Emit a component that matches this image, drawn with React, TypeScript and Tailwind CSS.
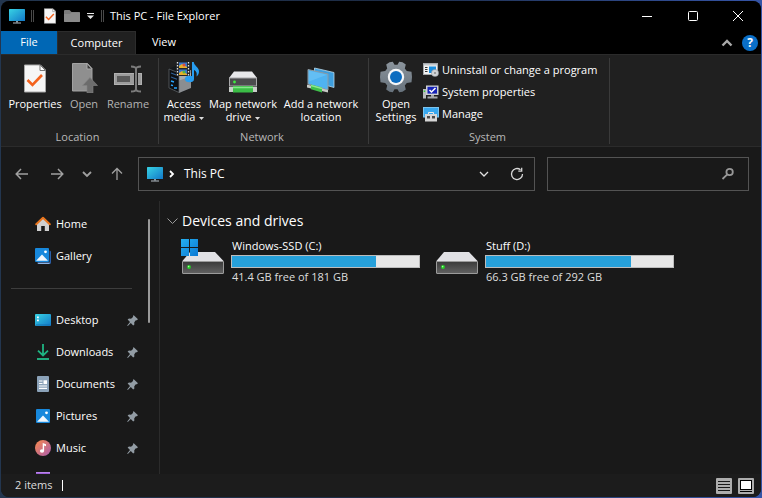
import type { ReactNode } from "react";

/* ---------- icons ---------- */

function PcIcon({ className = "" }: { className?: string }) {
  return (
    <svg viewBox="0 0 16 16" width="16" height="16" className={className} aria-hidden="true">
      <defs>
        <linearGradient id="pc" x1="0" y1="0" x2="1" y2="1">
          <stop offset="0" stopColor="#38d3e4" />
          <stop offset="1" stopColor="#1278c8" />
        </linearGradient>
      </defs>
      <rect x="0" y="1" width="16" height="12" rx="0.6" fill="url(#pc)" />
      <path d="M7 13h2v1.5H7z" fill="#8a98a4" />
      <path d="M4 14.4h8v1H4z" fill="#b4bec6" />
    </svg>
  );
}

function CheckedPage({ w, h }: { w: number; h: number }) {
  return (
    <svg viewBox="0 0 22 28" width={w} height={h} aria-hidden="true">
      <path d="M.5.5h16l5 5v22H.5z" fill="#f6f6f6" stroke="#a8a8a8" />
      <path d="M16 .5v5.5h5.5z" fill="#fff" stroke="#777" />
      <path d="M3.500 15.500l5 5L18 10.500" fill="none" stroke="#f4631e" strokeWidth="2.6" />
    </svg>
  );
}

function OpenPage() {
  return (
    <svg viewBox="0 0 28 31" width="28" height="31" aria-hidden="true">
      <path d="M2.500 1.500h15l4.500 5v22.500H2.500z" fill="#8f8f8f" stroke="#a2a2a2" />
      <path d="M17 1.500v5.500h5z" fill="#3a3a3a" stroke="#aaa" />
      <path d="M20 15.500l7.500 8H23V31h-6v-7.500h-4.500z" fill="#6c6c6c" stroke="#858585" strokeWidth=".6" />
    </svg>
  );
}

function RenameIcon() {
  return (
    <svg viewBox="0 0 28 28" width="28" height="28" aria-hidden="true">
      <rect x=".5" y="8.500" width="27" height="11" fill="#9c9c9c" stroke="#b0b0b0" />
      <rect x="3" y="11" width="13" height="6" fill="#5a5a5a" />
      <path d="M17 1.500c3 0 5 .5 5 2.500 0-2 2-2.500 5-2.500M22 4v20M17 26.500c3 0 5-.5 5-2.500 0 2 2 2.500 5 2.500" fill="none" stroke="#202020" strokeWidth="4" />
      <path d="M17 1.500c3 0 5 .5 5 2.500 0-2 2-2.500 5-2.500M22 4v20M17 26.500c3 0 5-.5 5-2.500 0 2 2 2.500 5 2.500" fill="none" stroke="#7b7b7b" strokeWidth="2" />
    </svg>
  );
}

function MediaIcon() {
  return (
    <svg viewBox="0 0 32 32" width="32" height="32" aria-hidden="true">
      <path d="M1 8l8-4 14 3v20l-9 4.500-13-4z" fill="#15191d" />
      <path d="M11 12l12-3v18l-12 5z" fill="#8b8e91" />
      <path d="M11 15l12-3v3.500l-12 4z" fill="#a9acae" />
      <path d="M1 8l10 4v19.500L1 27z" fill="#0d0f12" stroke="#666b70" strokeWidth=".7" />
      <path d="M3 12l6 2.300M3 16l6 2.300" stroke="#2f5f94" strokeWidth="1.200" />
      <path d="M3 20l3 1M6 27h3M3 24l2 .6" stroke="#29a5ff" strokeWidth="1.500" />
      <rect x="8" y="1" width="14" height="14" fill="#23262b" />
      <path d="M9.500 1v14M20.500 1v14" stroke="#e2e2e2" strokeWidth="1.300" strokeDasharray="1.500 1.500" />
      <rect x="11" y="1.500" width="8" height="5.500" fill="#3975cc" />
      <rect x="11" y="8.500" width="8" height="5.500" fill="#3975cc" />
      <path d="M11 5l3-2 5 3v1h-8zM11 12l3-2 5 3v1h-8z" fill="#e8b02b" />
      <circle cx="16" cy="4" r="1.500" fill="#e04c3c" />
      <circle cx="16" cy="11" r="1.500" fill="#54b843" />
      <ellipse cx="21.500" cy="18" rx="4.500" ry="3.200" fill="#279df0" />
      <path d="M24 18V1h1.800c0 4 5.700 5 5.200 10-.3 2-1.200 3.500-2.500 4.500 1-4-1-6-2.500-6.500v9z" fill="#279df0" />
    </svg>
  );
}

function NetDriveIcon() {
  return (
    <svg viewBox="0 0 28 22" width="28" height="22" aria-hidden="true">
      <path d="M5 .5h18l5 6.500H0z" fill="#e8e8ea" />
      <rect x=".5" y="7" width="27" height="8" fill="#4b4b4d" stroke="#a9a9ab" />
      <circle cx="5.500" cy="11" r="1.400" fill="#3fea3f" />
      <rect x="0" y="16" width="28" height="5" fill="#c9cdc9" />
      <rect x="4" y="15" width="20" height="6.500" fill="#3bbd46" />
      <path d="M4 16.500h20" stroke="#86e68b" strokeWidth="1.500" />
    </svg>
  );
}

function NetPlaceIcon() {
  return (
    <svg viewBox="0 0 28 26" width="28" height="26" aria-hidden="true">
      <path d="M7.500 1l19.500 4.500v15L7.500 15z" fill="#3f9fde" stroke="#b9d8ea" strokeWidth=".8" />
      <path d="M1 2.500l20 4.500v16L1 17z" fill="#4fb3f1" stroke="#8e9aa2" />
      <path d="M2 3.700l18 4.100L2 14.500z" fill="#83cff9" opacity=".4" />
      <path d="M0 17.500l21 5.500v2.500L0 20.500z" fill="#c6cac6" />
      <path d="M4 17.500l11 3v5L4 22.300z" fill="#3fbf4b" />
      <path d="M4 18.500l11 3" stroke="#8be891" strokeWidth="1.300" />
    </svg>
  );
}

function GearIcon() {
  return (
    <svg viewBox="0 0 32 32" width="32" height="32" aria-hidden="true">
      <defs>
        <linearGradient id="gear" x1="0" y1="0" x2="0" y2="1">
          <stop offset="0" stopColor="#8b949c" />
          <stop offset="1" stopColor="#67727c" />
        </linearGradient>
      </defs>
      <path
        d="M9.500 1.200l3.300-.4 1.700 2.900h3l1.700-2.900 3.300.4 3.300 2.300-1 4 2 2.500 4.700.8.500 5.200-.5 5.200-4.700.8-2 2.500 1 4-3.300 2.300-3.300.4-1.700-2.900h-3l-1.700 2.900-3.300-.4-3.300-2.300 1-4-2-2.500-4.700-.8L0 16l.5-5.200 4.700-.8 2-2.500-1-4z"
        fill="url(#gear)"
      />
      <circle cx="16" cy="16" r="8.200" fill="#f4f6f8" />
      <circle cx="16" cy="16" r="6" fill="#0b6cc0" />
    </svg>
  );
}

function UninstallIcon() {
  return (
    <svg viewBox="0 0 16 14" width="16" height="14" aria-hidden="true">
      <rect x=".5" y=".5" width="14" height="11" fill="#f2f2f2" stroke="#a5a9ad" />
      <rect x="1" y="1" width="13" height="1.500" fill="#c3c8cc" />
      <path d="M2 4.500h2.500M2 6.500h2.500M2 8.500h2.500" stroke="#333" />
      <rect x="6" y="3.500" width="7" height="6.500" fill="#1b8fe0" />
      <circle cx="12" cy="10" r="3.600" fill="#cfd3d6" stroke="#8b8f92" strokeWidth=".5" />
      <circle cx="12" cy="10" r="1" fill="#888" />
    </svg>
  );
}

function SysPropsIcon() {
  return (
    <svg viewBox="0 0 16 14" width="16" height="14" aria-hidden="true">
      <rect x="0" y="4" width="3" height="9.500" fill="#b9bcbe" />
      <rect x=".7" y="5.500" width="1.500" height="1.500" fill="#3cd03c" />
      <rect x="3" y=".5" width="12.500" height="9.500" fill="#cfd1d3" />
      <rect x="4.500" y="1.800" width="9.500" height="6.800" fill="#1723b8" />
      <path d="M6.500 5l2 2L12.500 3" fill="none" stroke="#fff" strokeWidth="1.500" />
      <path d="M8 10h3v1.500h3.500v2h-10v-2H8z" fill="#a6a9ac" />
    </svg>
  );
}

function ManageIcon() {
  return (
    <svg viewBox="0 0 16 15" width="16" height="15" aria-hidden="true">
      <rect x=".5" y=".5" width="15" height="9.500" fill="#38a8ef" stroke="#7cc4ee" />
      <path d="M5.500 7V5.500h5V7" fill="none" stroke="#e8e8e8" />
      <rect x="2" y="7" width="12" height="7.500" fill="#d6d6d6" />
      <rect x="4" y="9" width="3" height="2.500" fill="#4a4a4a" />
      <rect x="9" y="9" width="3" height="2.500" fill="#4a4a4a" />
    </svg>
  );
}

function HomeIcon() {
  return (
    <svg viewBox="0 0 16 16" width="16" height="16" aria-hidden="true">
      <path d="M2 7.500L8 2l6 5.500V15H2z" fill="#d0d0d0" />
      <path d="M6.200 10h3.600v5.500H6.200z" fill="#191919" />
      <path d="M1.200 8.200L8 1.800l6.800 6.400" fill="none" stroke="#e8741c" strokeWidth="2" strokeLinejoin="round" strokeLinecap="round" />
    </svg>
  );
}

function PictureIcon({ stacked = false }: { stacked?: boolean }) {
  return (
    <svg viewBox="0 0 16 16" width="16" height="16" aria-hidden="true">
      {stacked && <path d="M14.500 2.500a1.500 1.500 0 011.500 1.500v10.500a1.500 1.500 0 01-1.500 1.500H4a1.500 1.500 0 01-1.500-1.500h12z" fill="#2a5fa8" />}
      {stacked && <path d="M2.500 14.700h12.300c0 .8-.6 1.300-1.300 1.300H4a1.500 1.500 0 01-1.500-1.300z" fill="#8fb4e6" />}
      <g transform={stacked ? undefined : "translate(1 1)"}>
        <rect width="14" height="14" rx="1" fill="#1788dc" />
        <path d="M1 12.800L7 6.500l6 6.300z" fill="#f0f7fd" />
        <circle cx="10.500" cy="3.800" r="1.400" fill="#fff" />
      </g>
    </svg>
  );
}

function DesktopIcon() {
  return (
    <svg viewBox="0 0 16 16" width="16" height="16" aria-hidden="true">
      <rect y="2" width="16" height="12" rx="1" fill="url(#pc)" />
      <path d="M2 4.500h1.800v1.800H2zM2 7.500h1.800v1.800H2z" fill="#fff" />
      <path d="M1 13h14" stroke="#126fb0" />
    </svg>
  );
}

function DownloadIcon() {
  return (
    <svg viewBox="0 0 16 16" width="16" height="16" aria-hidden="true">
      <path d="M8 0v11M3 6.700l5 4.800 5-4.800" fill="none" stroke="#1fb583" strokeWidth="1.800" />
      <path d="M2 15h12" stroke="#23bd8a" strokeWidth="1.800" />
    </svg>
  );
}

function DocumentIcon() {
  return (
    <svg viewBox="0 0 16 16" width="16" height="16" aria-hidden="true">
      <rect x="2" width="12" height="16" rx="1" fill="#8ba2b8" />
      <path d="M4 5h3.500M4 7.500h3.500M4 10h8M4 12.300h8" stroke="#fff" strokeWidth="1.200" />
      <rect x="8.500" y="4.300" width="3.500" height="3.800" fill="#fff" />
    </svg>
  );
}

function MusicIcon() {
  return (
    <svg viewBox="0 0 16 16" width="16" height="16" aria-hidden="true">
      <defs>
        <linearGradient id="mus" x1="0" y1="0" x2="1" y2="1">
          <stop offset="0" stopColor="#f98a4c" />
          <stop offset="1" stopColor="#a95cae" />
        </linearGradient>
      </defs>
      <circle cx="8" cy="8" r="8" fill="url(#mus)" />
      <ellipse cx="7" cy="11" rx="2.100" ry="1.800" fill="#fff" />
      <path d="M7.700 11V3l3.300 1.200v2L9.100 5.600V11z" fill="#fff" />
    </svg>
  );
}

function VideoIcon() {
  return (
    <svg viewBox="0 0 16 16" width="16" height="16" aria-hidden="true">
      <rect x="1" y="0" width="14" height="15" rx="1" fill="#9d5fd6" />
      <path d="M1 .5h14" stroke="#b884ea" />
    </svg>
  );
}

function PinIcon() {
  return (
    <svg viewBox="0 0 11 11" width="11" height="11" aria-hidden="true">
      <path d="M6.500 0L11 4.300l-1.300.9-1.200.3-1.300 2 .2 2L6.200 10.500 3.800 8 .8 11l-.6-.6L3 7 .6 4.600 2 3.600l2 .2 1.800-1.500z" fill="#929ca4" />
    </svg>
  );
}

function DriveIcon({ system = false }: { system?: boolean }) {
  return (
    <svg viewBox="0 0 43 36" width="43" height="36" aria-hidden="true">
      <defs>
        <linearGradient id="drv" x1="0" y1="0" x2="0" y2="1">
          <stop offset="0" stopColor="#3a3a3a" />
          <stop offset="1" stopColor="#626262" />
        </linearGradient>
        <linearGradient id="win" x1="0" y1="0" x2="1" y2="1">
          <stop offset="0" stopColor="#25b0f0" />
          <stop offset="1" stopColor="#0a78d4" />
        </linearGradient>
      </defs>
      <path d="M9 13h25l9 9.500H1z" fill="#e1e1e5" />
      <rect x="1.500" y="22.500" width="41" height="12" rx=".5" fill="url(#drv)" stroke="#9b9b9b" />
      <circle cx="8" cy="28" r="1.900" fill="#22d322" />
      <circle cx="7.600" cy="27.600" r=".8" fill="#a2ffa2" />
      {system && <path d="M0 0h8v8H0zM9 0h8v8H9zM0 9h8v8H0zM9 9h8v8H9z" fill="url(#win)" />}
    </svg>
  );
}

function Stroke({ d, size = 14, color = "#d0d0d0", width = 1 }: { d: string; size?: number; color?: string; width?: number }) {
  return (
    <svg viewBox="0 0 14 14" width={size} height={size} fill="none" stroke={color} strokeWidth={width} aria-hidden="true">
      <path d={d} />
    </svg>
  );
}

function Caret() {
  return (
    <svg viewBox="0 0 5 3" width="5" height="3" className="ml-1 inline-block align-middle" aria-hidden="true">
      <path d="M0 0h5L2.500 3z" fill="#ddd" />
    </svg>
  );
}

/* ---------- ribbon ---------- */

function RibbonGroup({ label, width, children }: { label: string; width: string; children: ReactNode }) {
  return (
    <section aria-label={label} className={`flex flex-col border-r border-[#3a3a3a] ${width}`}>
      <div className="flex flex-1 items-start">{children}</div>
      <div className="pr-1 text-center leading-[14px] text-[#b8b8b8]">{label}</div>
    </section>
  );
}

function BigButton({ icon, width, disabled, children }: { icon: ReactNode; width: string; disabled?: boolean; children: ReactNode }) {
  return (
    <button type="button" disabled={disabled} className={`flex flex-col items-center whitespace-nowrap leading-[13px] disabled:text-[#b4b4b4] ${width}`}>
      <span className="mb-[3px] flex h-9 items-end justify-center pb-px">{icon}</span>
      <span>{children}</span>
    </button>
  );
}

function SmallButton({ icon, children }: { icon: ReactNode; children: ReactNode }) {
  return (
    <button type="button" className="flex h-[22px] items-center gap-[3px] whitespace-nowrap">
      {icon}
      {children}
    </button>
  );
}

/* ---------- panes ---------- */

const pinned = [
  { name: "Desktop", icon: <DesktopIcon /> },
  { name: "Downloads", icon: <DownloadIcon /> },
  { name: "Documents", icon: <DocumentIcon /> },
  { name: "Pictures", icon: <PictureIcon /> },
  { name: "Music", icon: <MusicIcon /> },
  { name: "Videos", icon: <VideoIcon /> },
];

function NavItem({ icon, name, pin }: { icon: ReactNode; name: string; pin?: boolean }) {
  return (
    <li>
      <a href="#" className="flex h-8 items-center pr-[21px] pl-[34px]">
        {icon}
        <span className="ml-[5px] flex-1">{name}</span>
        {pin && <PinIcon />}
      </a>
    </li>
  );
}

const drives = [
  { name: "Windows-SSD (C:)", free: 41.4, total: 181, system: true },
  { name: "Stuff (D:)", free: 66.3, total: 292, system: false },
];

function Drive({ name, free, total, system }: (typeof drives)[number]) {
  const used = ((total - free) / total) * 100;
  return (
    <li className="flex w-[254px]">
      <DriveIcon system={system} />
      <div className="ml-[7px] w-[189px] leading-[14px]">
        <div className="ml-px pb-[2px]">{name}</div>
        <div role="meter" aria-label={`${name} used space`} aria-valuenow={Math.round(used)} aria-valuemin={0} aria-valuemax={100} className="h-[13px] border border-[#bcbcbc] bg-[#e6e6e6]">
          <div className="h-full bg-[#26a0da]" style={{ width: `${used}%` }} />
        </div>
        <div className="ml-px pt-[2px] text-[#dedede]">
          {free} GB free of {total} GB
        </div>
      </div>
    </li>
  );
}

export default function App() {
  return (
    <div className="h-screen bg-gradient-to-r from-[#23364f] via-[#1d2c46] to-[#3554a6] p-px font-['Open_Sans','Noto_Sans',sans-serif] text-[11px] text-white">
      <div className="flex h-full flex-col overflow-hidden rounded-lg bg-[#191919]">
        <header className="flex h-[30px] shrink-0 items-center bg-black pl-2">
          <PcIcon />
          <span className="ml-[6px] h-3 w-[3px] border-x border-[#4a4a4a]" />
          <button type="button" aria-label="Properties" className="ml-[10px]">
            <CheckedPage w={12} h={16} />
          </button>
          <button type="button" aria-label="New folder" className="ml-2">
            <svg viewBox="0 0 16 14" width="16" height="14" aria-hidden="true">
              <path d="M0 2a1 1 0 011-1h4.500L7.500 3H15a1 1 0 011 1v8a1 1 0 01-1 1H1a1 1 0 01-1-1z" fill="#7b7b7b" />
              <path d="M0 5h6l1.500-1.500H16V12a1 1 0 01-1 1H1a1 1 0 01-1-1z" fill="#8a8a8a" />
            </svg>
          </button>
          <button type="button" aria-label="Customize toolbar" className="ml-[7px]">
            <svg viewBox="0 0 7 6" width="7" height="6" aria-hidden="true">
              <path d="M0 0h7v1H0zM0 2.500h7L3.500 6z" fill="#e8e8e8" />
            </svg>
          </button>
          <span className="ml-[7px] h-3 w-[3px] border-x border-[#4a4a4a]" />
          <h1 className="ml-[6px] flex-1">This PC - File Explorer</h1>
          <button type="button" aria-label="Minimize" className="flex h-full w-[46px] items-center justify-center">
            <Stroke d="M2 7.500h10" color="#fff" />
          </button>
          <button type="button" aria-label="Maximize" className="flex h-full w-[45px] items-center justify-center">
            <Stroke d="M3.500 2.500h7a1 1 0 011 1v7a1 1 0 01-1 1h-7a1 1 0 01-1-1v-7a1 1 0 011-1z" color="#fff" />
          </button>
          <button type="button" aria-label="Close" className="flex h-full w-[46px] items-center justify-center">
            <Stroke d="M2 2l10 10M12 2L2 12" color="#fff" />
          </button>
        </header>

        <div role="tablist" className="flex h-[23px] shrink-0 items-stretch bg-black">
          <button type="button" role="tab" aria-selected="false" className="w-14 bg-[#0067b5]">File</button>
          <button type="button" role="tab" aria-selected="true" className="w-[79px] border border-b-0 border-[#2c2c2c] bg-[#202020]">Computer</button>
          <button type="button" role="tab" aria-selected="false" className="w-14">View</button>
          <div className="flex flex-1 items-center justify-end gap-2 pr-[3px]">
            <button type="button" aria-label="Collapse the ribbon">
              <Stroke d="M2.500 9.500L7 5l4.500 4.500" color="#a9a9a9" width={2.4} />
            </button>
            <button type="button" aria-label="Help" className="size-4 rounded-full bg-[#0a6fc8] text-center text-[12px] font-bold leading-4">?</button>
          </div>
        </div>

        <div className="flex h-[93px] shrink-0 border-y border-[#2b2b2b] bg-[#202020] pt-[3px] pb-[2px]">
          <RibbonGroup label="Location" width="w-[158px]">
            <BigButton width="ml-[7px] w-[54px]" icon={<CheckedPage w={22} h={29} />}>Properties</BigButton>
            <BigButton width="w-11" disabled icon={<OpenPage />}>Open</BigButton>
            <BigButton width="w-11" disabled icon={<RenameIcon />}>Rename</BigButton>
          </RibbonGroup>
          <RibbonGroup label="Network" width="w-[210px] pl-px">
            <BigButton width="w-12" icon={<MediaIcon />}>Access<br />media<Caret /></BigButton>
            <BigButton width="w-[70px]" icon={<NetDriveIcon />}>Map network<br />drive<Caret /></BigButton>
            <BigButton width="w-[86px]" icon={<NetPlaceIcon />}>Add a network<br />location</BigButton>
          </RibbonGroup>
          <RibbonGroup label="System" width="w-[241px] pl-px">
            <BigButton width="w-[52px]" icon={<GearIcon />}>Open<br />Settings</BigButton>
            <div className="flex flex-col pt-px pl-px">
              <SmallButton icon={<UninstallIcon />}>Uninstall or change a program</SmallButton>
              <SmallButton icon={<SysPropsIcon />}>System properties</SmallButton>
              <SmallButton icon={<ManageIcon />}>Manage</SmallButton>
            </div>
          </RibbonGroup>
        </div>

        <div className="flex h-[54px] shrink-0 items-center pr-3 pl-[14px]">
          <div className="flex w-[123px] items-center">
            <button type="button" aria-label="Back"><Stroke d="M13 7H1.500M6 2L1.200 7 6 12" color="#a0a0a0" width={1.5} /></button>
            <button type="button" aria-label="Forward" className="ml-[21px]"><Stroke d="M1 7h11.500M8 2l4.800 5L8 12" color="#a0a0a0" width={1.5} /></button>
            <button type="button" aria-label="Recent locations" className="ml-4"><Stroke d="M3 5l4 4 4-4" color="#a0a0a0" width={1.8} /></button>
            <button type="button" aria-label="Up" className="ml-4"><Stroke d="M7 13V1.500M2 6.500l5-5 5 5" color="#a0a0a0" width={1.3} /></button>
          </div>
          <nav aria-label="Address" className="flex h-[34px] flex-1 items-center border border-[#535353] pr-[10px] pl-2">
            <PcIcon />
            <span className="ml-[2px]"><Stroke d="M5 4l3 3-3 3" color="#fff" width={1.8} /></span>
            <a href="#" className="ml-[5px] flex-1 text-[12px]">This PC</a>
            <button type="button" aria-label="Previous locations"><Stroke d="M3 5l4 4 4-4" color="#e0e0e0" width={1.3} /></button>
            <button type="button" aria-label="Refresh" className="ml-[19px]"><Stroke d="M12.500 7A5.500 5.500 0 1 1 10.500 2.800M11.700 .8v3.400H8.300" color="#d8d8d8" width={1.3} /></button>
          </nav>
          <label className="ml-3 flex h-[34px] w-[202px] items-center border border-[#535353] pr-[13px]">
            <input type="search" aria-label="Search This PC" className="min-w-0 flex-1 bg-transparent px-2 outline-none" />
            <Stroke d="M11.800 5a3.200 3.200 0 1 1-6.400 0a3.200 3.200 0 0 1 6.400 0zM6.300 7.300L1.500 12" color="#979797" width={1.8} />
          </label>
        </div>

        <main className="flex min-h-0 flex-1">
          <aside className="flex w-[159px] shrink-0 border-r border-[#2b2b2b]">
            <div className="flex-1 overflow-y-auto pt-[7px] [scrollbar-width:none]">
              <ul>
                <NavItem icon={<HomeIcon />} name="Home" />
                <NavItem icon={<PictureIcon stacked />} name="Gallery" />
              </ul>
              <hr className="mt-4 mr-[27px] mb-[15px] ml-[10px] border-[#3d3d3d]" />
              <ul>
                {pinned.map((p) => (
                  <NavItem key={p.name} icon={p.icon} name={p.name} pin />
                ))}
              </ul>
            </div>
            <div className="-ml-[11px] mt-[18px] mr-[9px] h-[104px] w-[2px] rounded-full bg-[#9a9a9a]" />
          </aside>
          <section className="min-w-0 flex-1 pt-[9px] pl-[6px]">
            <h2 className="flex items-center text-[14px] leading-[22px]">
              <Stroke d="M1.500 4.500l5 5 5-5" color="#9a9a9a" />
              <span className="ml-[2px]">Devices and drives</span>
            </h2>
            <ul className="mt-[7px] flex flex-wrap pl-[15px]">
              {drives.map((d) => (
                <Drive key={d.name} {...d} />
              ))}
            </ul>
          </section>
        </main>

        <footer className="flex h-[23px] shrink-0 items-center bg-[#1c1c1c] pr-[7px] pl-[14px] text-[#dcdcdc]">
          <span>2 items</span>
          <span className="ml-[10px] h-[11px] w-px bg-white" />
          <div className="flex flex-1 justify-end gap-[6px]">
            <button type="button" aria-label="Details view">
              <svg viewBox="0 0 16 16" width="16" height="16" aria-hidden="true">
                <rect width="16" height="16" rx="1" fill="#adadad" />
                <path d="M2 3.500h12M2 6.500h12M2 9.500h12M2 12.500h12" stroke="#191919" />
              </svg>
            </button>
            <button type="button" aria-label="Large thumbnails view">
              <svg viewBox="0 0 16 16" width="16" height="16" aria-hidden="true">
                <rect width="16" height="16" rx="1" fill="#adadad" />
                <rect x="2.500" y="2.500" width="11" height="9" fill="#fff" stroke="#000" />
                <path d="M2 13.500h12" stroke="#000" />
              </svg>
            </button>
          </div>
        </footer>
      </div>
    </div>
  );
}
